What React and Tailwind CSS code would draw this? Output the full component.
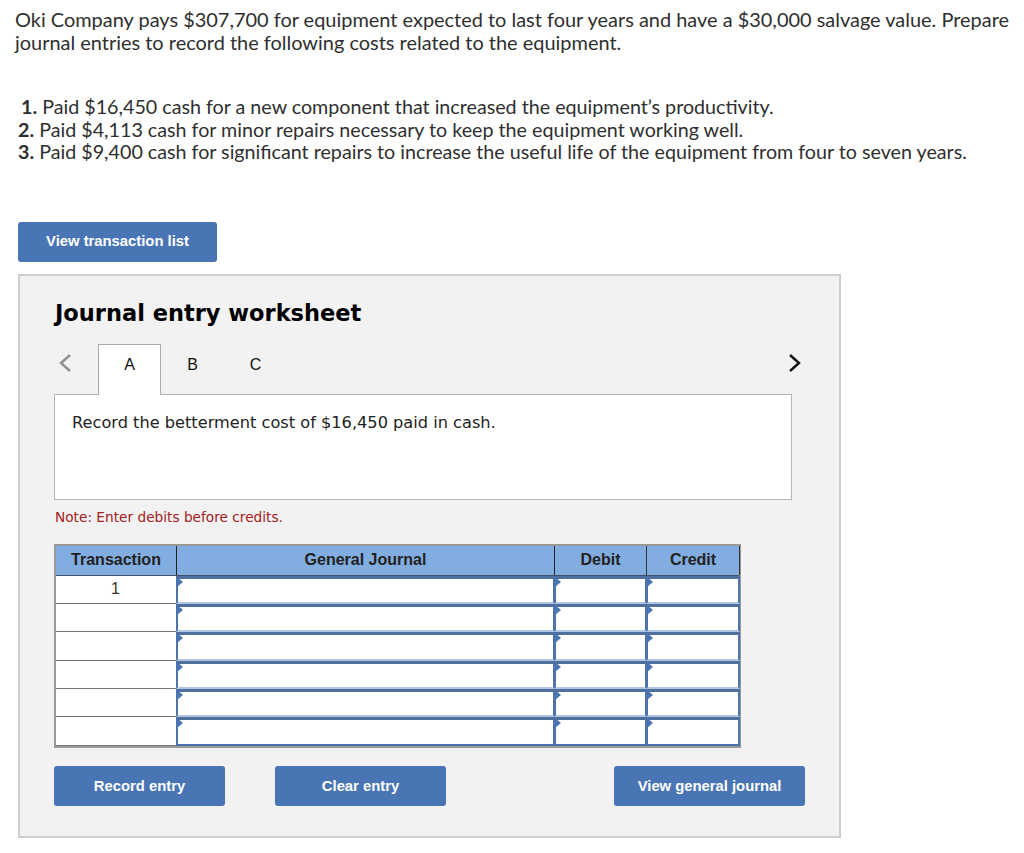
import React from "react";

const ROWS = ["1", "", "", "", "", ""];
const COLS = "grid grid-cols-[121px_378px_92px_93px]";

const Btn = ({ children, className }) => (
  <button className={`h-10 rounded-[3px] bg-[#4975b4] text-white text-[14.8px] font-bold font-['Liberation_Sans',Arial,sans-serif] ${className}`}>
    {children}
  </button>
);

const InputCell = ({ last }) => (
  <div className={`relative border-x-2 border-t-[3px] border-x-[#4f72a8] border-t-[#4f6f9f] bg-white -ml-px ${last ? "border-b-2 border-b-[#4f72a8]" : "border-b-2 border-b-[#b0c5e5]"}`}>
    <span className="absolute -left-px -top-[2px] h-0 w-0 border-y-[5px] border-l-[6px] border-y-transparent border-l-[#4975b4]" />
  </div>
);

const App = () => {
  return (
    <div className="min-h-[853px] bg-white text-[#2f2f2f] font-['Lato',sans-serif]">
      <div className="pl-[15px] pr-2 pt-[8px] text-[19.95px] leading-[22.5px]">
        Oki Company pays $307,700 for equipment expected to last four years and have a $30,000 salvage value. Prepare journal entries to record the following costs related to the equipment.
      </div>

      <ol className="mt-[43px] pl-[18px] text-[19.7px] leading-[22.5px]">
        <li><b className="ml-[3px]">1.</b> Paid $16,450 cash for a new component that increased the equipment’s productivity.</li>
        <li><b>2.</b> Paid $4,113 cash for minor repairs necessary to keep the equipment working well.</li>
        <li><b>3.</b> Paid $9,400 cash for significant repairs to increase the useful life of the equipment from four to seven years.</li>
      </ol>

      <div className="pl-[18px] pt-[58px]">
        <Btn className="w-[199px]">View transaction list</Btn>
      </div>

      <div className="ml-[18px] mt-[12px] h-[564px] w-[823px] border-2 border-[#cfcfcf] bg-[#f2f2f2] pl-[34px] font-['DejaVu_Sans',sans-serif]">
        <h2 className="pl-px pt-[22px] text-[22.5px] font-bold leading-[30px] text-black">Journal entry worksheet</h2>

        <div className="mt-[16px] flex h-[51px] items-center">
          <svg width="14" height="20" viewBox="0 0 14 20" className="ml-[4px] mb-[12px]" fill="none" stroke="#8f8f8f" strokeWidth="2.4">
            <path d="M12 2 3 10l9 8" />
          </svg>
          <div className="relative z-10 ml-[26px] flex h-[51px] w-[63px] items-start justify-center border border-b-0 border-[#ababab] bg-white pt-[8px] font-['Liberation_Sans',sans-serif] text-[16px] text-[#111]">
            A
          </div>
          <div className="mb-[8px] flex font-['Liberation_Sans',sans-serif] text-[16px] text-[#111]">
            <span className="w-[63px] text-center">B</span>
            <span className="w-[63px] text-center">C</span>
          </div>
          <svg width="14" height="20" viewBox="0 0 14 20" className="ml-[501px] mb-[12px]" fill="none" stroke="#111" strokeWidth="2.4">
            <path d="M2 2l9 8-9 8" />
          </svg>
        </div>

        <div className="-mt-px h-[106px] w-[738px] border border-[#b5b5b5] bg-white pl-[17px] pt-[18px] text-[16.2px] leading-[20px] text-[#222]">
          Record the betterment cost of $16,450 paid in cash.
        </div>

        <p className="mt-[8px] pl-px text-[13.7px] leading-[18px] text-[#a32020]">Note: Enter debits before credits.</p>

        <div className="mt-[18px] w-[687px] border-2 border-[#999] font-['Liberation_Sans',sans-serif]">
          <div className={`${COLS} h-[30px] bg-[#82ade0] text-[16px] font-bold text-[#222] leading-[28px] text-center border-b border-[#3f4f66]`}>
            <div className="border-r border-[#222]">Transaction</div>
            <div className="border-r border-[#222]">General Journal</div>
            <div className="border-r border-[#333]">Debit</div>
            <div className="border-r border-[#333]">Credit</div>
          </div>
          {ROWS.map((r, i) => (
            <div key={i} className={`${COLS} h-[28.4px]`}>
              <div className="border-b border-r border-[#777] bg-white pr-px text-center text-[16px] leading-[26px] text-[#333] font-['Liberation_Sans',sans-serif]">{r}</div>
              <InputCell last={i === 5} />
              <InputCell last={i === 5} />
              <InputCell last={i === 5} />
            </div>
          ))}
        </div>

        <div className="mt-[18px] flex">
          <Btn className="w-[171px]">Record entry</Btn>
          <Btn className="ml-[50px] w-[171px]">Clear entry</Btn>
          <Btn className="ml-[168px] w-[191px]">View general journal</Btn>
        </div>
      </div>
    </div>
  );
};

export default App;
